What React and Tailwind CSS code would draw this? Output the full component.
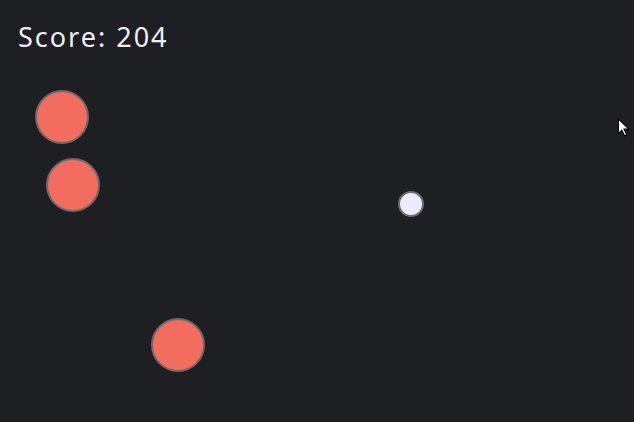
export default function App() {
  const enemies = [
    { x: 35, y: 90 },
    { x: 46, y: 158 },
    { x: 151, y: 318 },
  ];

  return (
    <div className="relative w-[634px] h-[422px] overflow-hidden bg-[#1e1f23]">
      <div
        className="absolute left-[18px] top-[17px] text-[27px] leading-[40px] tracking-[2px] text-[#eeeef6]"
        style={{ fontFamily: '"Comic Sans MS", "Noto Sans", sans-serif' }}
      >
        Score: 204
      </div>

      {enemies.map((e, i) => (
        <div
          key={i}
          className="absolute w-[54px] h-[54px] rounded-full bg-[#f26d5e] border-2 border-[#70686a]"
          style={{ left: e.x, top: e.y }}
        />
      ))}

      {/* player */}
      <div className="absolute left-[398px] top-[191px] w-[26px] h-[26px] rounded-full bg-[#ebebfd] border-2 border-[#6c6c78]" />

      {/* mouse cursor */}
      <svg className="absolute left-[617px] top-[118px]" width="14" height="20" viewBox="0 0 12 18">
        <path d="M1 1 L1 14 L4 11 L6.5 16 L8.5 15 L6 10 L10.5 10 Z" fill="#ffffff" stroke="#000000" strokeWidth="1" />
      </svg>
    </div>
  );
}
